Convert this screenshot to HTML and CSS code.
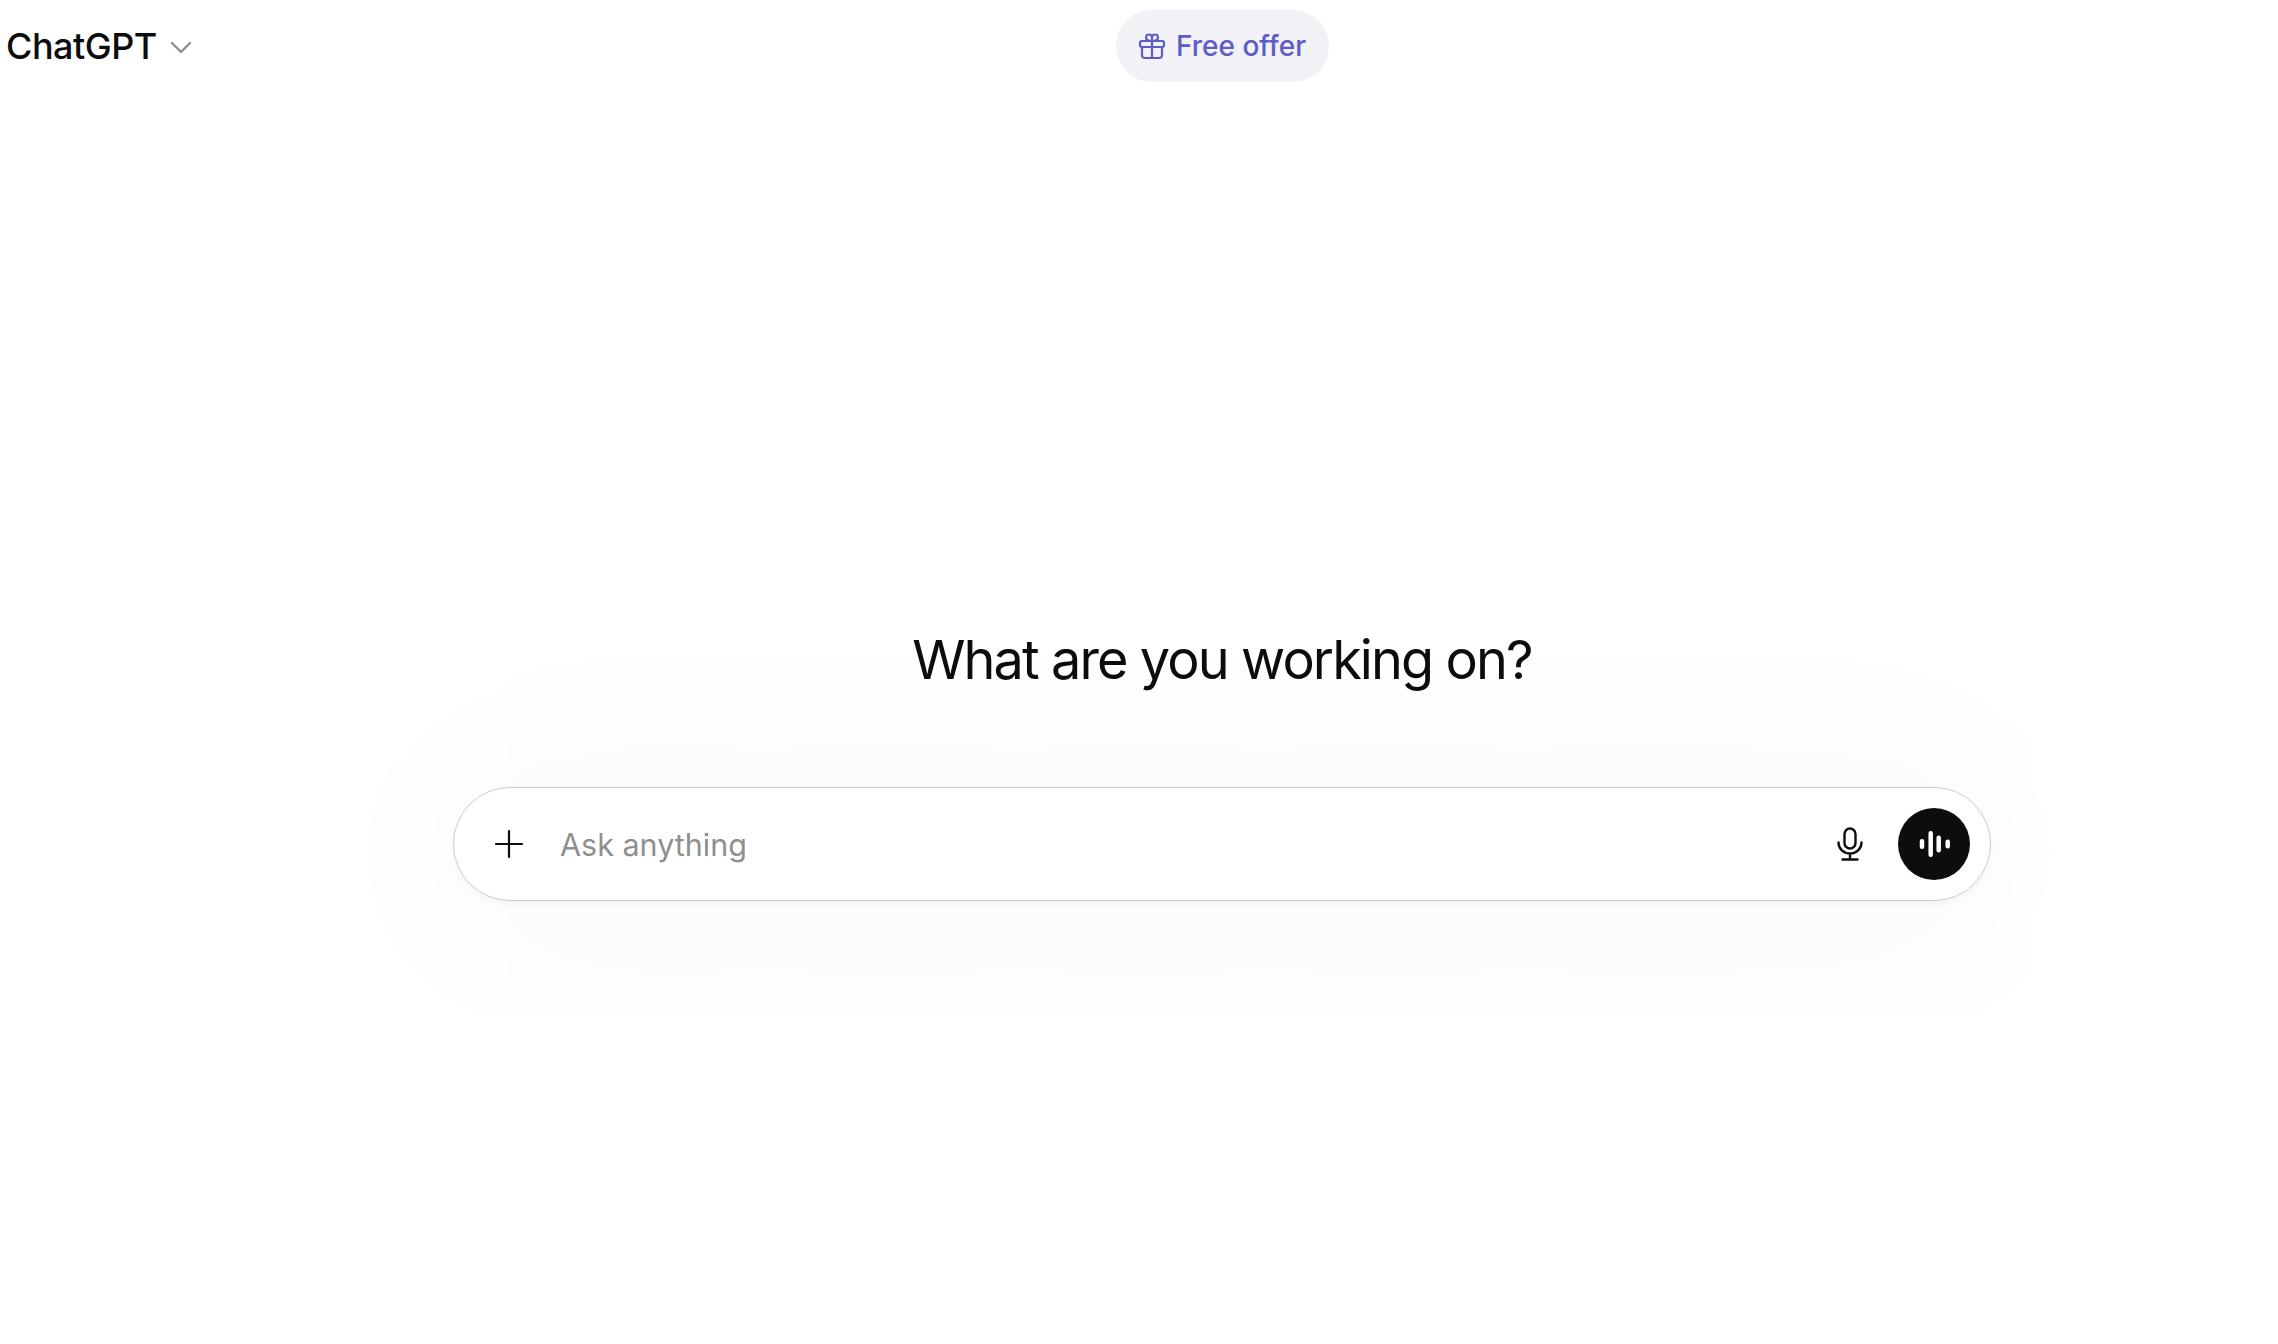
FILE: index.html
```html
<!DOCTYPE html>
<html lang="en">
<head>
    <meta charset="UTF-8">
    <title>ChatGPT</title>
    <link rel="stylesheet" href="styles.css">
</head>
<body>
    <header class="topbar">
        <div class="model-picker">
            <span class="model-name">ChatGPT</span>
            <svg class="chevron" width="24" height="24" viewBox="0 0 24 24" fill="none" stroke="#8f8f8f" stroke-width="2.4" stroke-linecap="round" stroke-linejoin="round"><path d="M3 8l9 9 9-9"/></svg>
        </div>
        <div class="offer">
            <svg width="28" height="28" viewBox="0 0 28 28" fill="none" stroke="#5e5cc9" stroke-width="2.2" stroke-linecap="round" stroke-linejoin="round"><rect x="2" y="9" width="24" height="6" rx="2"/><path d="M4 15v8a3 3 0 0 0 3 3h14a3 3 0 0 0 3-3v-8M14 9v17M14 9c-2 0-6 0-6-3.500a2.800 2.800 0 0 1 6 0zM14 9c2 0 6 0 6-3.500a2.800 2.800 0 0 0-6 0z"/></svg>
            <span>Free offer</span>
        </div>
    </header>

    <main class="main">
        <h1 class="title">What are you working on?</h1>
        <div class="composer">
            <svg class="plus" width="30" height="30" viewBox="0 0 30 30" fill="none" stroke="#0d0d0d" stroke-width="2.200" stroke-linecap="round"><path d="M15 2v26M2 15h26"/></svg>
            <span class="placeholder">Ask anything</span>
            <svg class="mic" width="26" height="34" viewBox="0 0 26 34" fill="none" stroke="#0d0d0d" stroke-width="2.400" stroke-linecap="round"><rect x="7.500" y="1.500" width="11" height="20" rx="5.500"/><path d="M1.500 15.500c0 6.500 5 11 11.500 11s11.500-4.500 11.500-11M13 26.500v6M5.500 32.500h15"/></svg>
            <button class="voice">
                <svg width="34" height="30" viewBox="0 0 34 30" fill="none" stroke="#fff" stroke-width="4.500" stroke-linecap="round"><path d="M5 12.250v5.500M13.700 4.250v21.500M21.700 8.750v12.500M30.700 12.750v4.500"/></svg>
            </button>
        </div>
    </main>
</body>
</html>
```

FILE: styles.css
```css
body {
    margin: 0;
    min-height: 1344px;
    font-family: Inter, "Liberation Sans", sans-serif;
    background-color: #ffffff;
    color: #0d0d0d;
    overflow: hidden;
}
.topbar {
    display: flex;
    align-items: center;
    height: 92px;
}
.model-picker {
    display: flex;
    align-items: center;
    gap: 12px;
    width: 1110px;
    padding-left: 6px;
}
.model-name {
    font-size: 36px;
    font-weight: 500;
    letter-spacing: -0.5px;
}
.chevron {
    margin-top: 2px;
}
.offer {
    display: flex;
    align-items: center;
    gap: 10px;
    height: 72px;
    padding: 0 23px 0 22px;
    border-radius: 36px;
    background-color: #f1f1f6;
    color: #5e5cc9;
    font-size: 28px;
    font-weight: 500;
    box-sizing: border-box;
}
.main {
    display: flex;
    flex-direction: column;
    align-items: center;
    padding-left: 166px;
    padding-top: 538px;
}
.title {
    margin: 0 0 97px;
    font-size: 54px;
    line-height: 60px;
    font-weight: 400;
    letter-spacing: -1.9px;
}
.composer {
    display: flex;
    align-items: center;
    width: 1538px;
    height: 114px;
    box-sizing: border-box;
    padding: 0 20px 0 40px;
    background-color: #ffffff;
    border: 1px solid #cdcdcd;
    border-radius: 57px;
    box-shadow: 0 3px 6px rgba(0, 0, 0, 0.04), 0 10px 210px rgba(40, 40, 90, 0.05);
}
.placeholder {
    flex: 1;
    margin-left: 36px;
    font-size: 30.5px;
    color: #8f8f8f;
}
.mic {
    margin-right: 35px;
}
.voice {
    display: flex;
    align-items: center;
    justify-content: center;
    width: 72px;
    height: 72px;
    padding: 0;
    border: 0;
    border-radius: 50%;
    background-color: #0d0d0d;
}
```
